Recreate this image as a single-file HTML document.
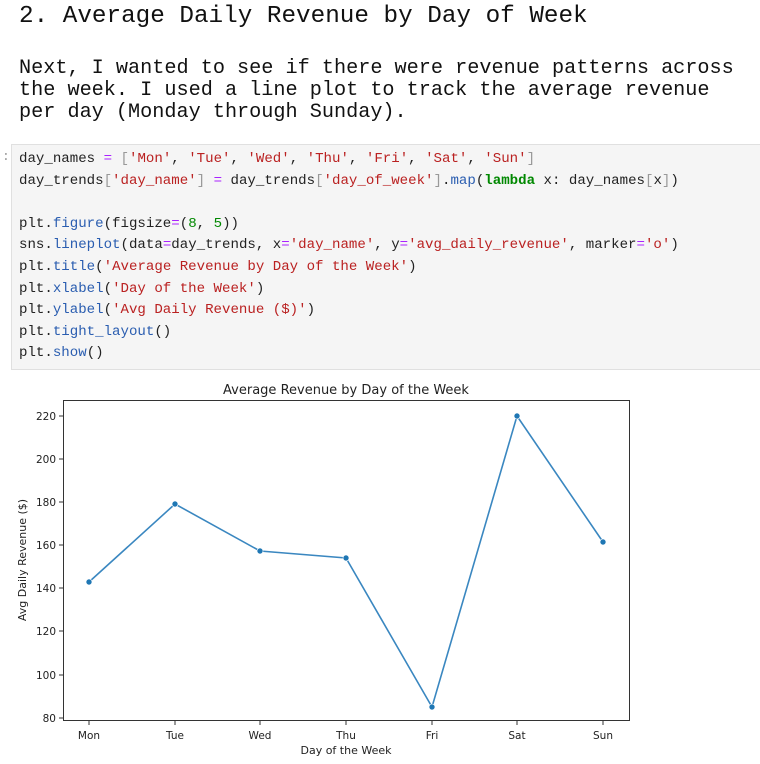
<!DOCTYPE html>
<html><head><style>
body{margin:0;width:760px;height:764px;background:#fff;position:relative;overflow:hidden}
.m{position:absolute;font-family:"Liberation Mono",monospace;white-space:pre;color:#111}
.h{left:19px;top:2px;font-size:24.3px;line-height:30px}
.p{left:19px;top:58px;font-size:20.2px;line-height:22px}
.code{position:absolute;left:11px;top:144px;width:760px;height:224px;background:#f5f5f5;border:1px solid #e0e0e0}
.c{left:19px;top:149px;font-size:14.1px;line-height:21.6px;color:#222}
.o{color:#a2f}.s{color:#ba2121}.n{color:#080}.k{color:#080;font-weight:bold}.b{color:#999}.f{color:#2a5db0}
</style></head><body>
<div class="m h">2. Average Daily Revenue by Day of Week</div>
<div class="m p">Next, I wanted to see if there were revenue patterns across
the week. I used a line plot to track the average revenue
per day (Monday through Sunday).</div>
<div class="m" style="left:2px;top:149px;font-size:13px;color:#999">:</div>
<div class="code"></div>
<div class="m c">day_names <span class="o">=</span> <span class="b">[</span><span class="s">'Mon'</span>, <span class="s">'Tue'</span>, <span class="s">'Wed'</span>, <span class="s">'Thu'</span>, <span class="s">'Fri'</span>, <span class="s">'Sat'</span>, <span class="s">'Sun'</span><span class="b">]</span>
day_trends<span class="b">[</span><span class="s">'day_name'</span><span class="b">]</span> <span class="o">=</span> day_trends<span class="b">[</span><span class="s">'day_of_week'</span><span class="b">]</span>.<span class="f">map</span>(<span class="k">lambda</span> x: day_names<span class="b">[</span>x<span class="b">]</span>)

plt.<span class="f">figure</span>(figsize<span class="o">=</span>(<span class="n">8</span>, <span class="n">5</span>))
sns.<span class="f">lineplot</span>(data<span class="o">=</span>day_trends, x<span class="o">=</span><span class="s">'day_name'</span>, y<span class="o">=</span><span class="s">'avg_daily_revenue'</span>, marker<span class="o">=</span><span class="s">'o'</span>)
plt.<span class="f">title</span>(<span class="s">'Average Revenue by Day of the Week'</span>)
plt.<span class="f">xlabel</span>(<span class="s">'Day of the Week'</span>)
plt.<span class="f">ylabel</span>(<span class="s">'Avg Daily Revenue ($)'</span>)
plt.<span class="f">tight_layout</span>()
plt.<span class="f">show</span>()</div>
<svg style="position:absolute;left:0;top:0" width="760" height="764" font-family="DejaVu Sans, Liberation Sans, sans-serif" fill="#222">
<text x="346" y="394" font-size="13" text-anchor="middle">Average Revenue by Day of the Week</text>
<rect x="63.5" y="400.5" width="566" height="320" fill="none" stroke="#333" stroke-width="1"/>
<g stroke="#333" stroke-width="1">
<line x1="59" y1="416" x2="63" y2="416"/><line x1="59" y1="459" x2="63" y2="459"/><line x1="59" y1="502" x2="63" y2="502"/><line x1="59" y1="545" x2="63" y2="545"/><line x1="59" y1="588" x2="63" y2="588"/><line x1="59" y1="631" x2="63" y2="631"/><line x1="59" y1="675" x2="63" y2="675"/><line x1="59" y1="718" x2="63" y2="718"/>
<line x1="89" y1="721" x2="89" y2="725"/><line x1="175" y1="721" x2="175" y2="725"/><line x1="260" y1="721" x2="260" y2="725"/><line x1="346" y1="721" x2="346" y2="725"/><line x1="432" y1="721" x2="432" y2="725"/><line x1="517" y1="721" x2="517" y2="725"/><line x1="603" y1="721" x2="603" y2="725"/>
</g>
<g font-size="10.5" text-anchor="end">
<text x="56" y="420">220</text><text x="56" y="463">200</text><text x="56" y="506">180</text><text x="56" y="549">160</text><text x="56" y="592">140</text><text x="56" y="635">120</text><text x="56" y="679">100</text><text x="56" y="722">80</text>
</g>
<g font-size="10.5" text-anchor="middle">
<text x="89" y="739">Mon</text><text x="175" y="739">Tue</text><text x="260" y="739">Wed</text><text x="346" y="739">Thu</text><text x="432" y="739">Fri</text><text x="517" y="739">Sat</text><text x="603" y="739">Sun</text>
<text x="346" y="754" font-size="11">Day of the Week</text>
<text transform="translate(26,560) rotate(-90)" font-size="11">Avg Daily Revenue ($)</text>
</g>
<polyline points="89,582 175,504 260,551 346,558 432,707 517,416 603,542" fill="none" stroke="#3a87c0" stroke-width="1.6"/>
<g fill="#1f77b4" stroke="#fff" stroke-width="0.6">
<circle cx="89" cy="582" r="3"/><circle cx="175" cy="504" r="3"/><circle cx="260" cy="551" r="3"/><circle cx="346" cy="558" r="3"/><circle cx="432" cy="707" r="3"/><circle cx="517" cy="416" r="3"/><circle cx="603" cy="542" r="3"/>
</g>
</svg>
</body></html>
